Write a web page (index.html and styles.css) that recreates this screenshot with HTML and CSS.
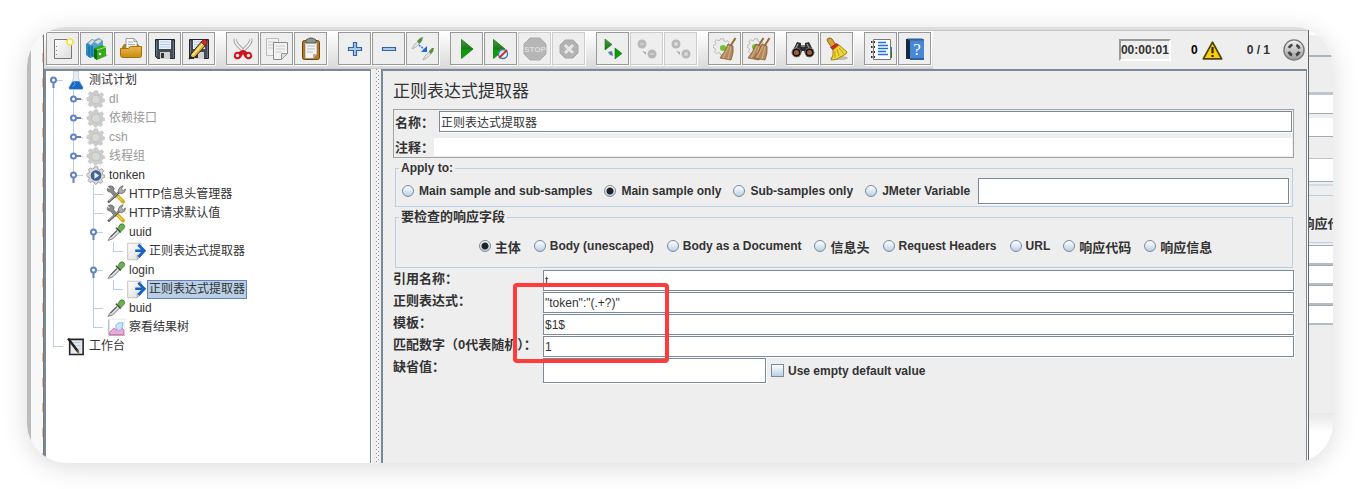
FILE: index.html
```html
<!DOCTYPE html>
<html lang="zh-CN">
<head>
  <meta charset="UTF-8">
  <meta name="viewport" content="width=device-width, initial-scale=1.0">
  <title>正则表达式提取器</title>
  <link rel="stylesheet" href="styles.css">
</head>
<body>
  <!-- Icon set -->
  <svg class="sprite" aria-hidden="true">
    <defs>
      <linearGradient id="g-green" x1="0" y1="0" x2="0" y2="1"><stop offset="0" stop-color="#4f9a45"/><stop offset=".5" stop-color="#137a10"/><stop offset=".55" stop-color="#0a9a08"/><stop offset="1" stop-color="#0ca50a"/></linearGradient>
      <linearGradient id="g-paper" x1="0" y1="0" x2="1" y2="1"><stop offset="0" stop-color="#fff"/><stop offset="1" stop-color="#dcdcdc"/></linearGradient>
      <linearGradient id="g-gold" x1="0" y1="0" x2="0" y2="1"><stop offset="0" stop-color="#e9b94a"/><stop offset="1" stop-color="#c98a12"/></linearGradient>
      <linearGradient id="g-steel" x1="0" y1="0" x2="0" y2="1"><stop offset="0" stop-color="#f4f4f4"/><stop offset="1" stop-color="#999"/></linearGradient>
      <symbol id="i-new" viewBox="0 0 24 24"><path d="M3.500 2.500h17v19h-17z" fill="url(#g-paper)" stroke="#777"/><path d="M5.500 9v1M5.500 13v1M5.500 17v1" stroke="#888"/><circle cx="19" cy="5" r="3" fill="#fffbe0" stroke="#f3e04d" stroke-width="1.600"/></symbol>
      <symbol id="i-templates" viewBox="0 0 24 24"><path d="M1 7l6-5 5 3v14l-7 2-4-3z" fill="#2a8dc4"/><path d="M7 4l7-3 4 3v14H9z" fill="#4aa5d4"/><path d="M3 6l4-3.500 3 1-4 5zM9 5l5-3 3 1.500-4 4z" fill="#d9dfe2" stroke="#8d9aa0" stroke-width=".7"/><path d="M4 9v11M7 9v10" stroke="#166594"/><path d="M16 20l7-1-3-3z" fill="#bbb"/><path d="M9 11l8-3 4 2v9l-9 4-3-2z" fill="#35a91a"/><path d="M9 11l3 2v10l-3-2z" fill="#116c0c"/><path d="M12 13l9-3" stroke="#9be47c"/><circle cx="15" cy="17" r="1.300" fill="#f4fff0"/></symbol>
      <symbol id="i-open" viewBox="0 0 24 24"><path d="M3 10l2-3h14l2 3v9H3z" fill="#b57a15"/><path d="M7 1.500h8l3 3V13H7z" fill="#fafafa" stroke="#888" stroke-width=".8"/><path d="M9 5h5M9 7.500h7M9 10h7" stroke="#aaa"/><path d="M15 1.500v3h3" fill="none" stroke="#888" stroke-width=".8"/><path d="M1.500 11.500h8l2-2h11v9q0 2-2 2h-17q-1.500 0-2-2z" fill="url(#g-gold)" stroke="#a86d0c"/></symbol>
      <symbol id="i-save" viewBox="0 0 24 24"><path d="M2.500 2.500h19v19h-17l-2-2z" fill="#444b54" stroke="#22262b"/><path d="M6 3h12v9H6z" fill="#e8f1fb"/><path d="M7 5h10M7 7.500h10M7 10h10" stroke="#b9cee6"/><path d="M7 15h10v7H7z" fill="#d2d2d2"/><path d="M8 16h3v5H8z" fill="#333"/><path d="M3.500 4v15M20.500 4v17" stroke="#6d7680"/></symbol>
      <symbol id="i-pencil" viewBox="0 0 24 24"><path d="M4 17L15 4l4 4L8 20l-6 2z" fill="#e9b32d" stroke="#222"/><path d="M5.500 18.500L16.500 6" stroke="#fff0a0" stroke-width="1.200"/><path d="M14 5l2-2q2-1 3 0t1 3l-2 3z" fill="#cf2929" stroke="#701313" stroke-width=".7"/><path d="M2 22l1-4 3 3z" fill="#222"/></symbol>
      <symbol id="i-cut" viewBox="0 0 24 24"><path d="M4.500 2q-1 3 3 7l8 8M19.500 2q1 3-3 7l-8 8" fill="none" stroke="#8c8c8c" stroke-width="3.400"/><path d="M4.500 2q-1 3 3 7l8 8M19.500 2q1 3-3 7l-8 8" fill="none" stroke="#eee" stroke-width="2"/><path d="M12 12.500l-4 2.500q-4-1-5 3c-1 3 2 5 5 4 2-1 3-3 4-5 1 2 2 4 4 5 3 1 6-1 5-4q-1-4-5-3z" fill="#d0121c"/><circle cx="6.500" cy="18.500" r="1.700" fill="#eee"/><circle cx="17.500" cy="18.500" r="1.700" fill="#eee"/></symbol>
      <symbol id="i-copy" viewBox="0 0 24 24"><path d="M1.500 1.500h12v17h-12z" fill="#f1f1f1" stroke="#bbb"/><path d="M3 5h8M3 8h8M3 11h6" stroke="#ccc"/><path d="M8.500 5.500h14v11l-6 6h-8z" fill="#f2f2f2" stroke="#8b8b8b"/><path d="M11 9h9M11 12h9M11 15h6" stroke="#ccc"/><path d="M22.500 16.500h-6v6z" fill="#ddd" stroke="#999"/></symbol>
      <symbol id="i-paste" viewBox="0 0 24 24"><rect x="3.500" y="3.500" width="17" height="19" rx="2" fill="#b9781a" stroke="#6d430b"/><path d="M6 5.500h12v12l-4 4H6z" fill="#f4f4f4" stroke="#777" stroke-width=".6"/><path d="M8 9h8M8 12h8M8 15h6" stroke="#bbb"/><path d="M18 17h-4v4z" fill="#aaa"/><path d="M7 6V3q5-4 10 0v3z" fill="#8c958c" stroke="#4f574f"/></symbol>
      <symbol id="i-plus" viewBox="0 0 24 24"><path d="M10.500 5.500h3v5h5v3h-5v5h-3v-5h-5v-3h5z" fill="#adc8e8" stroke="#2f65a8" stroke-width="1.200"/></symbol>
      <symbol id="i-minus" viewBox="0 0 24 24"><path d="M5.500 10.500h13v3h-13z" fill="#adc8e8" stroke="#2f65a8" stroke-width="1.200"/></symbol>
      <symbol id="i-dropper" viewBox="0 0 24 24"><path d="M2 22l3-5 9-9 3 3-9 9z" fill="#d9dfdc" stroke="#666"/><path d="M5 18l8-8" stroke="#333" stroke-width="1.200"/><path d="M12 6l6 6" stroke="#444" stroke-width="2"/><path d="M14 7l3-5q3-2 5 0t0 5l-4 4z" fill="#6db052" stroke="#3d6f2c"/></symbol>
      <symbol id="i-toggle" viewBox="0 0 24 24"><path d="M1 12l2-4 5-5 2 2-5 5zM12 23l2-4 5-5 2 2-5 5z" fill="#e4e4e4" stroke="#aaa" stroke-width=".8"/><path d="M6 4l3-3 3-1-1 4-3 3zM18 14l3-3h2l-1 4-3 2z" fill="#598f42"/><path d="M8 8l6 5" stroke="#3b83ed" stroke-width="1.600" stroke-dasharray="2 1"/><path d="M16 9v6h-6z" fill="#1969e5"/></symbol>
      <symbol id="i-play" viewBox="0 0 24 24"><path d="M6.500 2.500L18 12 6.500 21.500z" fill="url(#g-green)" stroke="#0e760e" stroke-width=".8"/></symbol>
      <symbol id="i-play-now" viewBox="0 0 24 24"><path d="M4.500 2.500L16 12 4.500 21.500z" fill="url(#g-green)" stroke="#0e760e" stroke-width=".8"/><circle cx="14" cy="17" r="4.500" fill="#e8eef6" fill-opacity=".8" stroke="#4379b7" stroke-width="1.400"/><path d="M10 21l8-8" stroke="#c9302c" stroke-width="1.800"/></symbol>
      <symbol id="i-stop" viewBox="0 0 24 24"><path d="M7 1h10l6 6v10l-6 6H7l-6-6V7z" fill="#b6b6b6" stroke="#aaa"/><text x="12" y="15" text-anchor="middle" class="stop-text">STOP</text></symbol>
      <symbol id="i-shutdown" viewBox="0 0 24 24"><path d="M8 3h8l5 5v8l-5 5H8l-5-5V8z" fill="#b3b3b3" stroke="#a8a8a8"/><path d="M8 8l8 8M16 8l-8 8" stroke="#e6e6e6" stroke-width="3"/></symbol>
      <symbol id="i-remote" viewBox="0 0 24 24"><path d="M4 2l7 5.500L4 13zM14 11l7 5.500-7 5.500z" fill="url(#g-green)" stroke="#0e760e" stroke-width=".6"/><path d="M7 15l4-1 1 5-3-1z" fill="#567cab"/></symbol>
      <symbol id="i-remote-off" viewBox="0 0 24 24"><circle cx="7" cy="7" r="4.500" fill="#b8b8b8"/><circle cx="17" cy="17" r="4.500" fill="#b8b8b8"/><path d="M5 7h4M15 17h4" stroke="#ddd"/><path d="M7 14l4 1v3z" fill="#aaa"/></symbol>
      <symbol id="i-remote-kill" viewBox="0 0 24 24"><circle cx="7" cy="7" r="4.500" fill="#b8b8b8"/><circle cx="17" cy="17" r="4.500" fill="#b8b8b8"/><path d="M5.500 5.500l3 3m0-3l-3 3M15.500 15.500l3 3m0-3l-3 3" stroke="#e4e4e4" stroke-width="1.300"/><path d="M7 14l4 1v3z" fill="#aaa"/></symbol>
      <symbol id="i-cog" viewBox="0 0 24 24"><path d="M10 1h4l.6 3 2.200 1 2.700-1.600 2.100 2.700L20 8.500l.5 2.200 2.500.8v3l-2.800.8-1 2 1.300 2.500-2.500 2.200-2.500-1.500-2.200.9L12.500 23h-2l-1.200-2.800-2.200-.8L4.500 21 2 18.500l1.500-2.700-.8-2L0 12.500V10l2.800-1 .9-2L2.300 4.500 4.800 2.300l2.500 1.400 2-.8z"/></symbol>
      <symbol id="i-broom-head" viewBox="0 0 24 24"><path d="M22.500 1l-5 8" stroke="#9b6a38" stroke-width="2"/><path d="M15 7l5 2q1 7-2 14l-11-2q5-6 8-14z" fill="#b38a5e" stroke="#80542a" stroke-width=".7"/><path d="M16 9l-6 12M18 10l-3 12" stroke="#dab88c" stroke-width=".9"/></symbol>
      <symbol id="i-clear" viewBox="0 0 24 24"><use href="#i-cog" x="0" y="1" width="18" height="18" fill="#ececec" stroke="#aaa"/><circle cx="10" cy="11" r="3" fill="#6cc52d"/><use href="#i-broom-head" width="24" height="24"/></symbol>
      <symbol id="i-clear-all" viewBox="0 0 24 24"><use href="#i-cog" x="0" y="1" width="18" height="18" fill="#ececec" stroke="#aaa"/><circle cx="8" cy="10" r="3" fill="#6cc52d"/><use href="#i-broom-head" x="-6" width="24" height="24"/><use href="#i-broom-head" width="24" height="24"/></symbol>
      <symbol id="i-search" viewBox="0 0 24 24"><path d="M6 5l4 1v2h4V6l4-1 5 10-2 4-5 1-3-6h-2l-3 6-5-1-2-4z" fill="#2c2c2c"/><path d="M7 7l-3 6M16 7l3 6M10 9h4" stroke="#9b9b9b" stroke-width="1.300"/><circle cx="5.500" cy="15.500" r="4.500" fill="#111" stroke="#777"/><circle cx="18.500" cy="15.500" r="4.500" fill="#111" stroke="#777"/><circle cx="5.500" cy="15.500" r="2.500" fill="#a85e2c"/><circle cx="18.500" cy="15.500" r="2.500" fill="#a85e2c"/></symbol>
      <symbol id="i-broom" viewBox="0 0 24 24"><ellipse cx="14" cy="21" rx="9" ry="2" fill="#bbb"/><path d="M2 3q0-2 3-2l2 1 4 6-4 3-4-6z" fill="#dba32c" stroke="#8d6313"/><path d="M5.500 10.500l6-4 3 2-6 5z" fill="#cf2525" stroke="#861212" stroke-width=".6"/><path d="M8 13l6-5 8 7-1 2-10 5.500-5 .5q3-5 2-10z" fill="#f0d637" stroke="#9e8511"/><path d="M10 14v7M12 12l2 7M14 11l5 6" stroke="#b99d18"/></symbol>
      <symbol id="i-functions" viewBox="0 0 24 24"><path d="M21 10h2v5h-2z" fill="#2777e6"/><path d="M21 15h2v6h-2z" fill="#0d870d"/><path d="M4.500 2.500h17v20h-17z" fill="#fff" stroke="#777"/><path d="M9 5.500h8M9 8.500h10M9 11.500h10M9 14.500h8M9 17.500h10" stroke="#1d71e8" stroke-width="1.300"/><path d="M2 5h4M2 10h4M2 15h4M2 20h4" stroke="#333" stroke-width="2"/><path d="M3 5h2M3 10h2M3 15h2M3 20h2" stroke="#ddd"/></symbol>
      <symbol id="i-help" viewBox="0 0 24 24"><path d="M3 2h18v19l-2 1H3z" fill="#4787d8"/><path d="M3 2h4v20H3z" fill="#172a3d"/><path d="M4 1.500h15l2 2H6zM7 21h14v2H7z" fill="#355e92"/><text x="14" y="18" text-anchor="middle" class="help-text">?</text></symbol>
      <symbol id="i-warn" viewBox="0 0 24 24"><path d="M12 2.500L22.500 21.500h-21z" fill="#f9cf0a" stroke="#4d4108" stroke-width="2" stroke-linejoin="round"/><path d="M12 8v7M12 17v2.500" stroke="#332b05" stroke-width="2.600"/></symbol>
      <symbol id="i-threads" viewBox="0 0 24 24"><circle cx="12" cy="12" r="11" fill="url(#g-steel)" stroke="#777" stroke-width="1.500"/><circle cx="12" cy="12" r="6" fill="none" stroke="#424242" stroke-width="3" stroke-dasharray="5 4.400" stroke-dashoffset="-2"/></symbol>
      <symbol id="i-flask" viewBox="0 0 24 24"><path d="M9 0h6v9l6 12q0 2-2 2H5q-2 0-2-2L9 9z" fill="#e8eef3" stroke="#b2bcc4" stroke-width=".8"/><path d="M8 13h8l5 8q0 2-2 2H5q-2 0-2-2z" fill="#1769c5"/><path d="M9 13l2 3-3 4" stroke="#7cb4ee" fill="none"/></symbol>
      <symbol id="i-gear-off" viewBox="0 0 24 24"><use href="#i-cog" width="24" height="24" fill="#cdcdcd" stroke="#c0c0c0" stroke-width=".7"/><circle cx="12" cy="12" r="5.500" fill="#d8d8d8" stroke="#bbb"/></symbol>
      <symbol id="i-gear-on" viewBox="0 0 24 24"><use href="#i-cog" width="24" height="24" fill="#dcdcdc" stroke="#888" stroke-width=".9"/><circle cx="12" cy="12" r="6" fill="#3a67a6" stroke="#475c77" stroke-width="1.500"/><path d="M10 8l6 4-6 4z" fill="#e8f2fd"/></symbol>
      <symbol id="i-tools" viewBox="0 0 24 24"><path d="M2 2q3-2 6 0t1 5l5 6-3 3-6-7Q0 9 1 4l3 2 1-1z" fill="#8a8a8a" stroke="#555" stroke-width=".7"/><path d="M14 14l7 7" stroke="#d7a81a" stroke-width="4.500" stroke-linecap="round"/><path d="M14 14l6 6" stroke="#f5d64e" stroke-width="1.500"/><path d="M2 22L17 8" stroke="#555" stroke-width="3"/><path d="M3 20.500L16 8.500" stroke="#ddd"/><path d="M15 10q-1-5 3-8l3-1-2 4 2 2 3-2q0 5-5 6z" fill="#aaa" stroke="#555" stroke-width=".8"/></symbol>
      <symbol id="i-extract" viewBox="0 0 24 24"><path d="M1.500 1.500h17v16l-5 5h-12z" fill="url(#g-paper)" stroke="#b5b5b5"/><path d="M18.500 17h-5v5z" fill="#fff" stroke="#999"/><path d="M11 11h9" stroke="#1463c1" stroke-width="3"/><path d="M15 3.500l7.500 7.500-7.500 8" fill="none" stroke="#1764c0" stroke-width="3.600"/></symbol>
      <symbol id="i-chart" viewBox="0 0 24 24"><path d="M2.500 1.500h20v20h-20z" fill="#fff" stroke="#ccc" stroke-dasharray="1 1"/><path d="M4 21v-3l5-5 4 2 4-5 5 5v6z" fill="#f1a7da" stroke="#c05aa6"/><path d="M12 13q-1-6 4-7h5l-2 9-4 1z" fill="#cce5ff" stroke="#6ca8e4"/><path d="M3 2v20h20" stroke="#999" fill="none"/></symbol>
      <symbol id="i-bench" viewBox="0 0 24 24"><path d="M4 3h17v19H4z" fill="#e6ebef" stroke="#222" stroke-width="2"/><path d="M9 7h9M8 11h10M10 15h8" stroke="#aebfce"/><path d="M2 2l13 17" stroke="#222" stroke-width="3"/><path d="M14 17l2 4" stroke="#9c7a30" stroke-width="1.500"/></symbol>
      <symbol id="i-opened" viewBox="0 0 20 19"><path d="M8 9.500h9" stroke="#b8cfe5"/><path d="M7.500 10v7" stroke="#6382bf" stroke-width="2"/><circle cx="7.500" cy="9" r="2.500" fill="#fff" stroke="#6382bf" stroke-width="2"/></symbol>
      <symbol id="i-closed" viewBox="0 0 20 19"><path d="M14 9.500h3" stroke="#b8cfe5"/><path d="M9 9h6" stroke="#6382bf" stroke-width="2"/><circle cx="7.500" cy="9" r="2.500" fill="#fff" stroke="#6382bf" stroke-width="2"/></symbol>
    </defs>
  </svg>

  <div class="frame">
    <div class="edge-left"></div>

    <div class="window">
      <div class="caption"></div>

      <header class="topbar">
        <div class="tools">
          <div class="group">
            <button aria-label="New"><svg><use href="#i-new"/></svg></button>
            <button aria-label="Templates"><svg><use href="#i-templates"/></svg></button>
            <button aria-label="Open"><svg><use href="#i-open"/></svg></button>
            <button aria-label="Save"><svg><use href="#i-save"/></svg></button>
            <button aria-label="Save as"><svg><use href="#i-save"/><use href="#i-pencil"/></svg></button>
          </div>
          <div class="group">
            <button aria-label="Cut"><svg><use href="#i-cut"/></svg></button>
            <button aria-label="Copy"><svg><use href="#i-copy"/></svg></button>
            <button aria-label="Paste"><svg><use href="#i-paste"/></svg></button>
          </div>
          <div class="group">
            <button aria-label="Expand all"><svg><use href="#i-plus"/></svg></button>
            <button aria-label="Collapse all"><svg><use href="#i-minus"/></svg></button>
            <button aria-label="Toggle"><svg><use href="#i-toggle"/></svg></button>
          </div>
          <div class="group">
            <button aria-label="Start"><svg><use href="#i-play"/></svg></button>
            <button aria-label="Start no pauses"><svg><use href="#i-play-now"/></svg></button>
            <button aria-label="Stop" disabled><svg><use href="#i-stop"/></svg></button>
            <button aria-label="Shutdown" disabled><svg><use href="#i-shutdown"/></svg></button>
          </div>
          <div class="group">
            <button aria-label="Remote start all"><svg><use href="#i-remote"/></svg></button>
            <button aria-label="Remote stop all" disabled><svg><use href="#i-remote-off"/></svg></button>
            <button aria-label="Remote shutdown all" disabled><svg><use href="#i-remote-kill"/></svg></button>
          </div>
          <div class="group">
            <button aria-label="Clear"><svg><use href="#i-clear"/></svg></button>
            <button aria-label="Clear all"><svg><use href="#i-clear-all"/></svg></button>
          </div>
          <div class="group">
            <button aria-label="Search"><svg><use href="#i-search"/></svg></button>
            <button aria-label="Reset search"><svg><use href="#i-broom"/></svg></button>
          </div>
          <div class="group">
            <button aria-label="Function helper"><svg><use href="#i-functions"/></svg></button>
            <button aria-label="Help"><svg><use href="#i-help"/></svg></button>
          </div>
        </div>
        <div class="status">
          <span class="timer">00:00:01</span>
          <span class="errors">0 <svg><use href="#i-warn"/></svg></span>
          <span class="threads">0 / 1</span>
          <svg class="light"><use href="#i-threads"/></svg>
        </div>
      </header>

      <div class="split">
        <nav class="tree">
          <ul>
            <li><i class="guide start"><svg><use href="#i-opened"/></svg></i><svg class="icon"><use href="#i-flask"/></svg><span>测试计划</span></li>
            <li class="off"><i class="guide line"></i><i class="guide line"><svg><use href="#i-closed"/></svg></i><svg class="icon"><use href="#i-gear-off"/></svg><span>dl</span></li>
            <li class="off"><i class="guide line"></i><i class="guide line"><svg><use href="#i-closed"/></svg></i><svg class="icon"><use href="#i-gear-off"/></svg><span>依赖接口</span></li>
            <li class="off"><i class="guide line"></i><i class="guide line"><svg><use href="#i-closed"/></svg></i><svg class="icon"><use href="#i-gear-off"/></svg><span>csh</span></li>
            <li class="off"><i class="guide line"></i><i class="guide line"><svg><use href="#i-closed"/></svg></i><svg class="icon"><use href="#i-gear-off"/></svg><span>线程组</span></li>
            <li><i class="guide line"></i><i class="guide end"><svg><use href="#i-opened"/></svg></i><svg class="icon"><use href="#i-gear-on"/></svg><span>tonken</span></li>
            <li><i class="guide line"></i><i class="guide"></i><i class="guide line branch"></i><svg class="icon"><use href="#i-tools"/></svg><span>HTTP信息头管理器</span></li>
            <li><i class="guide line"></i><i class="guide"></i><i class="guide line branch"></i><svg class="icon"><use href="#i-tools"/></svg><span>HTTP请求默认值</span></li>
            <li><i class="guide line"></i><i class="guide"></i><i class="guide line"><svg><use href="#i-opened"/></svg></i><svg class="icon"><use href="#i-dropper"/></svg><span>uuid</span></li>
            <li><i class="guide line"></i><i class="guide"></i><i class="guide line"></i><i class="guide end branch"></i><svg class="icon"><use href="#i-extract"/></svg><span>正则表达式提取器</span></li>
            <li><i class="guide line"></i><i class="guide"></i><i class="guide line"><svg><use href="#i-opened"/></svg></i><svg class="icon"><use href="#i-dropper"/></svg><span>login</span></li>
            <li class="selected"><i class="guide line"></i><i class="guide"></i><i class="guide line"></i><i class="guide end branch"></i><svg class="icon"><use href="#i-extract"/></svg><span>正则表达式提取器</span></li>
            <li><i class="guide line"></i><i class="guide"></i><i class="guide line branch"></i><svg class="icon"><use href="#i-dropper"/></svg><span>buid</span></li>
            <li><i class="guide line"></i><i class="guide"></i><i class="guide end branch"></i><svg class="icon"><use href="#i-chart"/></svg><span>察看结果树</span></li>
            <li><i class="guide end branch"></i><svg class="icon"><use href="#i-bench"/></svg><span>工作台</span></li>
          </ul>
        </nav>

        <div class="divider"></div>

        <main class="panel">
          <h1>正则表达式提取器</h1>

          <div class="naming">
            <div class="name-row">
              <label for="name">名称：</label>
              <input type="text" id="name" value="正则表达式提取器">
            </div>
            <div class="comment-row">
              <label for="comment">注释：</label>
              <input type="text" id="comment">
            </div>
          </div>

          <fieldset class="apply">
            <legend>Apply to:</legend>
            <div class="choices">
              <label><input type="radio" name="scope">Main sample and sub-samples</label>
              <label><input type="radio" name="scope" checked>Main sample only</label>
              <label><input type="radio" name="scope">Sub-samples only</label>
              <label><input type="radio" name="scope">JMeter Variable</label>
              <input type="text" aria-label="JMeter Variable">
            </div>
          </fieldset>

          <fieldset class="field">
            <legend>要检查的响应字段</legend>
            <div class="choices">
              <label class="cjk"><input type="radio" name="field" checked>主体</label>
              <label><input type="radio" name="field">Body (unescaped)</label>
              <label><input type="radio" name="field">Body as a Document</label>
              <label class="cjk"><input type="radio" name="field">信息头</label>
              <label><input type="radio" name="field">Request Headers</label>
              <label><input type="radio" name="field">URL</label>
              <label class="cjk"><input type="radio" name="field">响应代码</label>
              <label class="cjk"><input type="radio" name="field">响应信息</label>
            </div>
          </fieldset>

          <div class="params">
            <label for="ref">引用名称：</label>
            <input type="text" id="ref" value="t">
            <label for="regex">正则表达式：</label>
            <input type="text" id="regex" value="&quot;token&quot;:&quot;(.+?)&quot;">
            <label for="template">模板：</label>
            <input type="text" id="template" value="$1$">
            <label for="match">匹配数字（0代表随机）：</label>
            <input type="text" id="match" value="1">
            <label for="default">缺省值：</label>
            <div class="default-row">
              <input type="text" id="default">
              <label><input type="checkbox">Use empty default value</label>
            </div>
            <div class="highlight"></div>
          </div>
        </main>
      </div>
    </div>

    <!-- Window showing from behind -->
    <div class="behind">
      <div class="behind-head"></div>
      <div class="behind-title"></div>
      <div class="behind-box"></div>
      <div class="behind-box"></div>
      <div class="behind-gap"></div>
      <div class="behind-box tall"></div>
      <div class="behind-line"></div>
      <div class="behind-group"><span>响应代</span></div>
      <div class="behind-field"></div>
      <div class="behind-field"></div>
      <div class="behind-field"></div>
      <div class="behind-field"></div>
      <div class="behind-rest"></div>
      <div class="behind-fade"></div>
    </div>
  </div>
</body>
</html>
```
FILE: styles.css
```css
* {
  box-sizing: border-box;
}

body {
  margin: 0;
  height: 100vh;
  padding: 27px 26px 26px 27px;
  background: #fff;
  color: #333;
  font-family: "Liberation Sans", "Noto Sans CJK SC", sans-serif;
  font-size: 12px;
  overflow: hidden;
}

.sprite {
  position: absolute;
  width: 0;
  height: 0;
}

.stop-text {
  font: bold 8px "Liberation Sans", sans-serif;
  fill: #ddd;
}

.help-text {
  font: 17px "Liberation Serif", serif;
  fill: #fff;
}

.frame {
  display: flex;
  height: 100%;
  border-radius: 40px;
  overflow: hidden;
  background: #fff;
  box-shadow: 0 4px 26px rgba(0, 0, 0, 0.14);
}

/* Left edge */
.edge-left {
  flex: 0 0 17px;
  border-left: 4px solid #bbb;
  border-right: 1px solid #777;
  background: repeating-linear-gradient(#f8f8f8 0 1px, #f0b894 1px 10px, #f8f8f8 10px 25px) right / 1px 100% no-repeat, #f8f8f8;
}

.window {
  flex: 1;
  min-width: 0;
  display: flex;
  flex-direction: column;
  background: #eee;
  border-right: 1px solid #666;
}

.caption {
  height: 4px;
  background: #ddd;
  border-bottom: 1px solid #c4c4c4;
}

/* Toolbar */
.topbar {
  display: flex;
  justify-content: space-between;
  height: 38px;
}

.tools {
  display: flex;
  gap: 11px;
  padding: 1px 2px 3px;
  background: linear-gradient(#fff, #dadada);
  border-bottom: 1px solid #ccc;
}

.group {
  display: flex;
  gap: 1px;
}

.tools button {
  display: flex;
  align-items: center;
  justify-content: center;
  width: 33px;
  height: 33px;
  padding: 0;
  border: 1px solid #999;
  background: #eee;
  box-shadow: 1px 1px 0 #fff;
}

.tools button:disabled {
  border-color: #ccc;
}

.tools svg {
  width: 24px;
  height: 24px;
}

.status {
  display: flex;
  align-items: center;
  padding-right: 3px;
  font-weight: bold;
}

.timer {
  padding: 2px 0;
  border: 2px solid;
  border-color: #999 #fff #fff #999;
  line-height: 14px;
}

.errors {
  display: flex;
  align-items: center;
  gap: 4px;
  margin: 0 24px 0 20px;
  color: #000;
}

.errors svg {
  width: 21px;
  height: 21px;
}

.light {
  width: 22px;
  height: 22px;
  margin-left: 13px;
}

/* Split area */
.split {
  flex: 1;
  min-height: 0;
  display: flex;
}

.tree {
  flex: 0 0 327px;
  border: 2px solid #7a8a99;
  border-right-width: 1px;
  border-bottom: 0;
  background: #fff;
}

.tree ul {
  margin: 0;
  padding: 0;
  list-style: none;
}

.tree li {
  display: flex;
  align-items: center;
  height: 19px;
}

.tree li span {
  margin-left: 1px;
  padding: 0 1px;
  border: 1px solid transparent;
  line-height: 17px;
  white-space: nowrap;
}

.tree .off span {
  color: #999;
}

.tree .selected span {
  background: #b8cfe5;
  border-color: #6382bf;
}

.icon {
  width: 20px;
  height: 19px;
}

.guide {
  width: 20px;
  height: 19px;
  background-repeat: no-repeat;
}

.guide svg {
  display: block;
  width: 20px;
  height: 19px;
}

.line {
  background-image: linear-gradient(#b8cfe5, #b8cfe5);
  background-size: 1px 100%;
  background-position: 7px 0;
}

.start {
  background-image: linear-gradient(#b8cfe5, #b8cfe5);
  background-size: 1px 10px;
  background-position: 7px 9px;
}

.end {
  background-image: linear-gradient(#b8cfe5, #b8cfe5);
  background-size: 1px 10px;
  background-position: 7px 0;
}

.branch {
  background-image: linear-gradient(#b8cfe5, #b8cfe5), linear-gradient(#b8cfe5, #b8cfe5);
  background-position: 7px 0, 7px 9px;
  background-size: 1px 100%, 10px 1px;
}

.end.branch {
  background-size: 1px 10px, 10px 1px;
}

.divider {
  flex: 0 0 10px;
  padding: 0 1px 0 4px;
  border-left: 1px solid #fff;
  background-color: #f2f2f2;
  background-image: conic-gradient(at 1px 1px, transparent 75%, #8a98a5 0), conic-gradient(at 1px 1px, transparent 75%, #8a98a5 0);
  background-size: 4px 4px;
  background-position: 0 0, 2px 2px;
  background-origin: content-box;
  background-clip: border-box, content-box;
  background-clip: content-box;
}

/* Editor panel */
.panel {
  flex: 1;
  min-width: 0;
  padding: 10px 12px 0 10px;
  border-top: 2px solid #7a8a99;
  border-left: 2px solid #7a8a99;
  border-right: 1px solid #7a8a99;
  margin-right: 1px;
  box-shadow: 1px 0 0 #fff;
}

h1 {
  margin: 0 0 6px;
  font-size: 17px;
  font-weight: normal;
  line-height: 22px;
}

input[type="text"] {
  min-width: 0;
  padding: 0 1px;
  border: 1px solid #7a8a99;
  border-radius: 0;
  background: #fff;
  box-shadow: 1px 1px 0 #fff;
  color: #333;
  font: inherit;
}

label,
legend {
  font-weight: bold;
  white-space: nowrap;
}

.naming {
  border: 1px solid #a3a3a3;
  padding: 1px;
}

.naming label {
  font-size: 13px;
}

.name-row,
.comment-row {
  display: flex;
  align-items: center;
}

.name-row {
  gap: 5px;
}

.name-row input {
  flex: 1;
  height: 21px;
}

.comment-row {
  height: 24px;
  align-items: flex-end;
}

.comment-row input[type="text"] {
  flex: 1;
  height: 18px;
  border: 0;
  box-shadow: none;
}

fieldset {
  min-width: 0;
  margin: 0 1px 0 2px;
  padding: 0 3px 2px 6px;
  border: 1px solid #b8cfe5;
}

legend {
  margin-left: -3px;
  padding: 0 2px;
  line-height: 20px;
}

.field legend,
.choices .cjk {
  font-size: 13px;
}

.choices {
  display: flex;
  align-items: center;
  gap: 12px;
}

.choices label {
  display: flex;
  align-items: center;
  gap: 5px;
}

.choices input[type="text"] {
  flex: 1;
  height: 26px;
  margin-left: -4px;
}

.field .choices {
  justify-content: center;
  gap: 13px;
  height: 38px;
}

.field .choices label {
  gap: 4px;
}

input[type="radio"] {
  appearance: none;
  width: 12px;
  height: 12px;
  margin: 0;
  border: 1px solid #7a8a99;
  border-radius: 50%;
  background: linear-gradient(#fff, #dde8f3 50%, #b8cfe5);
}

input[type="radio"]:checked {
  background: radial-gradient(#222 0 3px, transparent 4px), linear-gradient(#fff, #b8cfe5);
}

.params {
  position: relative;
  display: grid;
  grid-template-columns: 150px 1fr;
  row-gap: 1px;
  margin-top: 2px;
}

.params > label {
  font-size: 13px;
  line-height: 18px;
}

.params > input {
  height: 21px;
}

.default-row {
  display: flex;
  align-items: center;
  gap: 5px;
}

.default-row input[type="text"] {
  width: 223px;
  height: 25px;
}

.default-row label {
  display: flex;
  align-items: center;
  gap: 4px;
}

input[type="checkbox"] {
  appearance: none;
  width: 13px;
  height: 13px;
  margin: 0;
  border: 1px solid #7a8a99;
  background: linear-gradient(#fff, #b8cfe5);
}

/* Red marker over the fields */
.highlight {
  position: absolute;
  top: 13px;
  left: 120px;
  width: 156px;
  height: 80px;
  border: 4px solid #ff3b3b;
  border-radius: 4px;
}

/* Window behind */
.behind {
  flex: 0 0 24px;
  overflow: hidden;
  padding-top: 8px;
  background: #eee;
  border-top: 8px solid #fff;
  padding-top: 0;
}

.behind-head {
  height: 22px;
  border-bottom: 2px solid #a9b4bf;
}

.behind-title {
  height: 38px;
  border-bottom: 3px solid #c0c6cf;
}

.behind-box {
  height: 19px;
  margin-bottom: 4px;
  border-bottom: 1px solid #a0abb7;
  background: #fff;
}

.behind-gap {
  height: 18px;
  border-bottom: 1px solid #bcc4cc;
}

.behind-box.tall {
  height: 23px;
  margin-bottom: 2px;
}

.behind-line {
  height: 12px;
  border-top: 2px solid #cfdcea;
  border-bottom: 1px solid #b8cfe5;
}

.behind-group {
  display: flex;
  align-items: center;
  justify-content: center;
  height: 47px;
  margin-bottom: 2px;
  padding-top: 6px;
  border-bottom: 1px solid #b8cfe5;
  font-size: 13px;
  font-weight: bold;
  white-space: nowrap;
}

.behind-field {
  height: 20px;
  border-top: 1px solid #a0abb7;
  border-bottom: 2px solid #b4bcc5;
  background: #fff;
}

.behind-rest {
  height: 88px;
}

.behind-fade {
  height: 60px;
  background: linear-gradient(#e8e8e8, #fff 20px);
}
```
